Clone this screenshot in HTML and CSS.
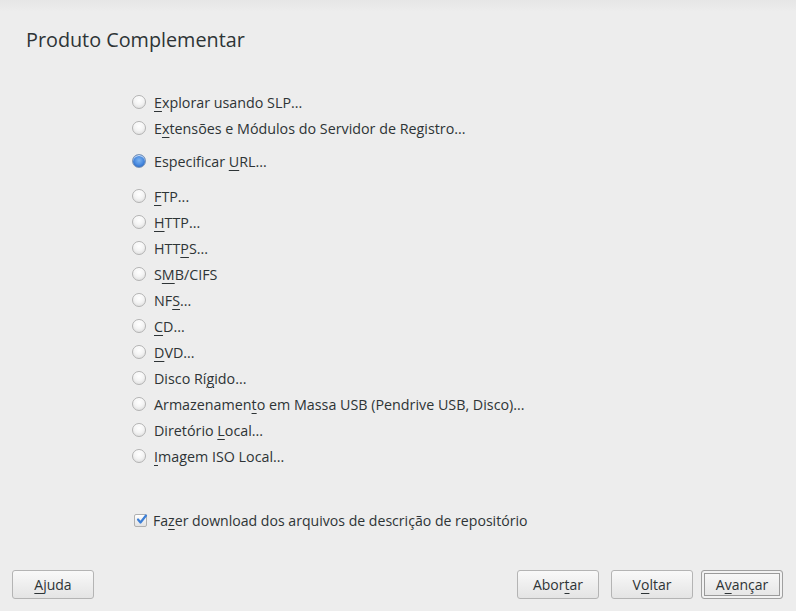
FILE: index.html
```html
<!DOCTYPE html>
<html lang="pt">
<head>
<meta charset="utf-8">
<title>Produto Complementar</title>
<link rel="stylesheet" href="styles.css">
</head>
<body>
<div class="window">
  <h1 class="title">Produto Complementar</h1>
  <main class="content">
    <div class="group">
      <label class="opt"><span class="radio"></span><span><u>E</u>xplorar usando SLP...</span></label>
      <label class="opt"><span class="radio"></span><span>E<u>x</u>tensões e Módulos do Servidor de Registro...</span></label>
    </div>
    <div class="group">
      <label class="opt"><span class="radio checked"></span><span>Especificar <u>U</u>RL...</span></label>
    </div>
    <div class="group">
      <label class="opt"><span class="radio"></span><span><u>F</u>TP...</span></label>
      <label class="opt"><span class="radio"></span><span><u>H</u>TTP...</span></label>
      <label class="opt"><span class="radio"></span><span>HTT<u>P</u>S...</span></label>
      <label class="opt"><span class="radio"></span><span>S<u>M</u>B/CIFS</span></label>
      <label class="opt"><span class="radio"></span><span>NF<u>S</u>...</span></label>
      <label class="opt"><span class="radio"></span><span><u>C</u>D...</span></label>
      <label class="opt"><span class="radio"></span><span><u>D</u>VD...</span></label>
      <label class="opt"><span class="radio"></span><span>Disco Rí<u>g</u>ido...</span></label>
      <label class="opt"><span class="radio"></span><span>Armazenamen<u>t</u>o em Massa USB (Pendrive USB, Disco)...</span></label>
      <label class="opt"><span class="radio"></span><span>Diretório <u>L</u>ocal...</span></label>
      <label class="opt"><span class="radio"></span><span><u>I</u>magem ISO Local...</span></label>
    </div>
    <label class="check-opt"><span class="checkbox"><svg viewBox="0 0 13 13" width="13" height="13"><path d="M3 6.5 L5.5 9.5 L11 2.5" fill="none" stroke="#3d7fd6" stroke-width="2.2" stroke-linecap="round" stroke-linejoin="round"/></svg></span><span>Fa<u>z</u>er download dos arquivos de descrição de repositório</span></label>
  </main>
  <footer class="buttons">
    <button class="btn"><u>A</u>juda</button>
    <div class="spacer"></div>
    <button class="btn">Abor<u>t</u>ar</button>
    <button class="btn">V<u>o</u>ltar</button>
    <button class="btn default">A<u>v</u>ançar</button>
  </footer>
</div>
</body>
</html>
```
FILE: styles.css
```css
* { box-sizing: border-box; }
html, body { margin: 0; padding: 0; }
body {
  background: #ededed;
  font-family: "Open Sans", "DejaVu Sans", sans-serif;
  color: #2e3436;
}
.window {
  width: 796px;
  height: 611px;
  display: flex;
  flex-direction: column;
  background: linear-gradient(#e6e6e6, #ededed 12px);
}
.title {
  margin: 0;
  padding: 27px 0 0 26px;
  font-size: 19.8px;
  font-weight: normal;
  line-height: 26px;
  color: #2e3436;
}
u {
  text-decoration: underline;
  text-underline-offset: 3px;
  text-decoration-thickness: 1px;
}
.content {
  flex: 1;
  display: flex;
  flex-direction: column;
  padding: 36px 0 0 132px;
  font-size: 14.3px;
}
.group { display: flex; flex-direction: column; }
.group + .group { margin-top: 7px; }
.group:nth-child(3) { margin-top: 9px; }
.opt {
  height: 26px;
  display: flex;
  align-items: center;
  gap: 8px;
  white-space: nowrap;
}
.radio {
  width: 14px;
  height: 14px;
  flex: none;
  border-radius: 50%;
  border: 1px solid #b3b3b3;
  background: radial-gradient(circle at 50% 35%, #ffffff 0%, #f4f4f4 45%, #d8d8d8 100%);
  box-shadow: inset 0 1px 0 rgba(255,255,255,0.8);
}
.radio.checked {
  border-color: #7a94b8;
  background: radial-gradient(circle at 50% 45%, #7db4f0 0%, #4a8be0 50%, #3070c8 75%, #dfe6ef 80%, #c8d0da 100%);
}
.check-opt {
  margin-top: 38px;
  display: flex;
  align-items: center;
  gap: 6px;
  height: 26px;
  margin-left: 2px;
  font-size: 14.1px;
}
.checkbox {
  width: 13px;
  height: 13px;
  flex: none;
  border: 1px solid #b0b0b0;
  border-radius: 2px;
  background: linear-gradient(#ffffff, #e2e2e2);
  position: relative;
}
.checkbox svg { position: absolute; left: 0; top: -2px; }
.buttons {
  display: flex;
  align-items: center;
  padding: 0 13px 12px 12px;
  gap: 12px;
}
.spacer { flex: 1; }
.btn {
  width: 82px;
  height: 29px;
  font-family: inherit;
  font-size: 14px;
  color: #2e3436;
  border: 1px solid #b4b4b4;
  border-radius: 3px;
  background: linear-gradient(#f9f9f9, #e4e4e4);
  padding: 0;
}
.btn.default {
  margin-left: -4px;
  box-shadow: inset 0 0 0 2px #f2f2f2, inset 0 0 0 3px #9a9a9a;
  border-color: #a0a0a0;
}
```
